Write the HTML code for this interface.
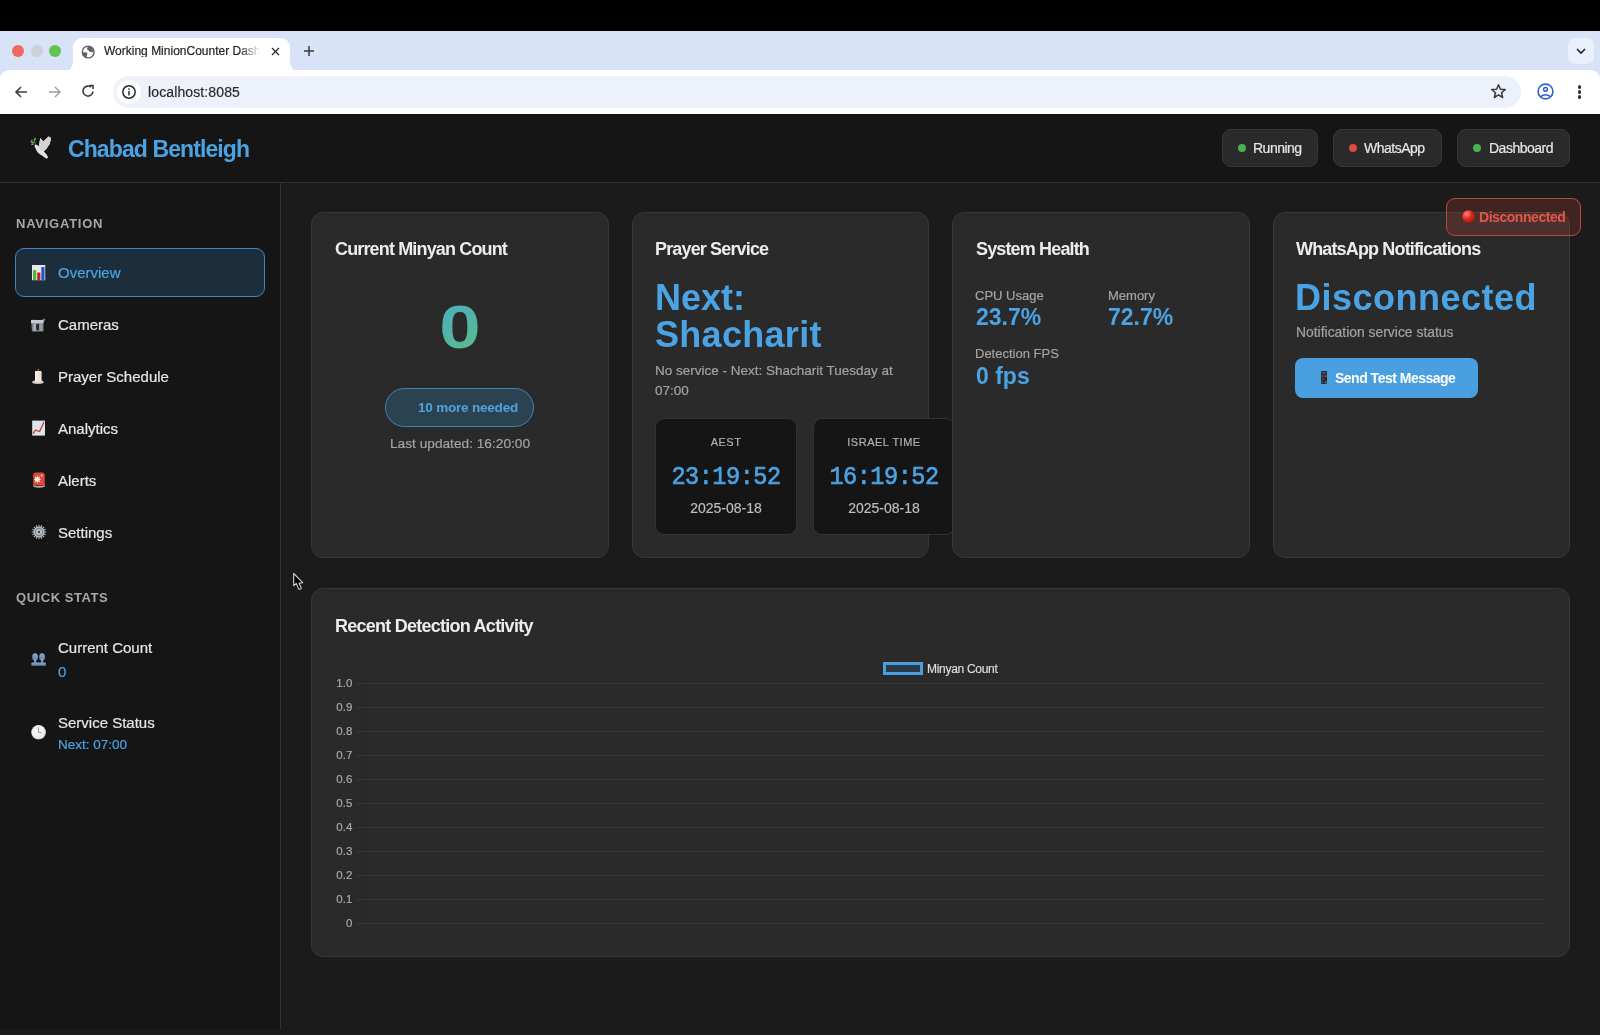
<!DOCTYPE html>
<html><head><meta charset="utf-8">
<style>
*{box-sizing:border-box;margin:0;padding:0}
html,body{width:1600px;height:1035px;overflow:hidden;background:#000;font-family:"Liberation Sans",sans-serif}
.a{position:absolute}
.t{position:absolute;white-space:nowrap;line-height:1;will-change:transform;-webkit-text-stroke:0.2px currentColor}
.t[style*="font-weight:700"],.ctitle,.navlbl{-webkit-text-stroke:0}
/* chrome */
#tabstrip{left:0;top:31px;width:1600px;height:60px;background:#d8e3f8}
#toolbar{left:0;top:70px;width:1600px;height:44px;background:#fff;border-radius:9px 9px 0 0}
#tab{left:73px;top:38px;width:217px;height:33px;background:#fff;border-radius:9px 9px 0 0}
#urlbar{left:113px;top:76px;width:1408px;height:32px;background:#edf2fa;border-radius:16px}
/* page */
#page{left:0;top:114px;width:1600px;height:921px;background:#1b1b1b}
#header{left:0;top:0;width:1600px;height:69px;background:#151515;border-bottom:1px solid #323232}
#sidebar{left:0;top:69px;width:281px;height:846px;background:#151515;border-right:1px solid #343434}
.card{position:absolute;background:#2a2a2a;border:1px solid #383838;border-radius:12px}
.pill{position:absolute;top:15px;height:38px;background:#2a2a2a;border:1px solid #363636;border-radius:9px}
.dot{position:absolute;top:14px;width:8px;height:8px;border-radius:50%}
.navlbl{color:#a8a8a8;font-size:13px;font-weight:700;letter-spacing:0.75px}
.navtxt{color:#e6e6e6;font-size:15px}
.ctitle{color:#ececec;font-size:18px;font-weight:700;letter-spacing:-0.85px}
.blue{color:#4ba3e3}
.muted{color:#a3a3a3}
.tbox{position:absolute;top:204px;width:142px;height:117px;background:#151515;border:1px solid #333;border-radius:9px}
.glab{color:#a8a8a8;font-size:11.5px}
.grid{position:absolute;left:363px;height:1px;width:1181px;background:#363636}
</style></head>
<body>
<!-- browser chrome -->
<div class="a" id="tabstrip"></div>
<div class="a" id="toolbar"></div>
<div class="a" id="tab"></div>
<!-- tab flares -->
<svg class="a" style="left:64px;top:61px" width="10" height="10"><path d="M0 10 Q9 10 9 0 L9 10Z" fill="#fff"/></svg>
<svg class="a" style="left:289px;top:61px" width="10" height="10"><path d="M10 10 Q1 10 1 0 L1 10Z" fill="#fff"/></svg>
<!-- traffic lights -->
<div class="a" style="left:12px;top:45px;width:12px;height:12px;border-radius:50%;background:#ee6a5e"></div>
<div class="a" style="left:31px;top:45px;width:12px;height:12px;border-radius:50%;background:#ccd0d8"></div>
<div class="a" style="left:49px;top:45px;width:12px;height:12px;border-radius:50%;background:#5fc453"></div>
<!-- globe -->
<svg class="a" style="left:81px;top:44.5px" width="14" height="14" viewBox="0 0 14 14"><circle cx="7.2" cy="7" r="5.9" stroke="#5f6368" stroke-width="1.4" fill="#fff"/><path d="M7.3 1.2Q6 2.6 5.8 4.2Q7.5 4.5 8 6.2Q9.8 7.8 12.6 7.2A5.9 5.9 0 0 0 7.3 1.2Z" fill="#5f6368"/><path d="M1.4 7.4Q3.5 7.2 5.8 7.6Q7.2 8.8 6 10Q5.5 11.6 6 12.8A5.9 5.9 0 0 1 1.4 7.4Z" fill="#5f6368"/></svg>
<div class="t" style="left:104px;top:45.3px;font-size:12px;color:#1f1f1f;width:158px;overflow:hidden;-webkit-mask-image:linear-gradient(90deg,#000 86%,transparent 99%)">Working MinionCounter Dashboard</div>
<svg class="a" style="left:271px;top:47px" width="9" height="9" viewBox="0 0 9 9"><path d="M1 1L8 8M8 1L1 8" stroke="#303030" stroke-width="1.3"/></svg>
<svg class="a" style="left:303px;top:45px" width="12" height="12" viewBox="0 0 12 12"><path d="M6 1V11M1 6H11" stroke="#3a3a3a" stroke-width="1.5"/></svg>
<!-- tab dropdown -->
<div class="a" style="left:1568px;top:38px;width:26px;height:26px;border-radius:7px;background:#e9effb"></div>
<svg class="a" style="left:1575px;top:46px" width="12" height="10" viewBox="0 0 12 10"><path d="M2 3L6 7L10 3" stroke="#222" stroke-width="1.6" fill="none"/></svg>
<!-- nav buttons -->
<svg class="a" style="left:13px;top:84px" width="16" height="16" viewBox="0 0 16 16"><path d="M14 8H3M8 3L3 8L8 13" stroke="#3c3c3c" stroke-width="1.6" fill="none"/></svg>
<svg class="a" style="left:47px;top:84px" width="16" height="16" viewBox="0 0 16 16"><path d="M2 8H13M8 3L13 8L8 13" stroke="#9a9a9a" stroke-width="1.4" fill="none"/></svg>
<svg class="a" style="left:80px;top:83px" width="16" height="16" viewBox="0 0 16 16"><path d="M13 8.5A5 5 0 1 1 11.2 4.2" stroke="#3c3c3c" stroke-width="1.6" fill="none"/><path d="M9.5 2.5H13V6" stroke="#3c3c3c" stroke-width="1.6" fill="none"/></svg>
<div class="a" id="urlbar"></div>
<div class="a" style="left:117px;top:80px;width:24px;height:24px;border-radius:50%;background:#fff"></div>
<svg class="a" style="left:121px;top:84px" width="16" height="16" viewBox="0 0 16 16"><circle cx="8" cy="8" r="6.2" stroke="#2a2a2a" stroke-width="1.5" fill="none"/><rect x="7.25" y="7" width="1.5" height="4.5" fill="#2a2a2a"/><rect x="7.25" y="4.3" width="1.5" height="1.5" fill="#2a2a2a"/></svg>
<div class="t" style="left:147.5px;top:84.6px;font-size:14px;color:#2a2a2a;letter-spacing:0.12px">localhost:8085</div>
<svg class="a" style="left:1490px;top:83px" width="17" height="17" viewBox="0 0 17 17"><path d="M8.5 1.8L10.4 6.3L15.2 6.6L11.5 9.7L12.7 14.5L8.5 11.9L4.3 14.5L5.5 9.7L1.8 6.6L6.6 6.3Z" stroke="#3a3a3a" stroke-width="1.5" fill="none" stroke-linejoin="round"/></svg>
<svg class="a" style="left:1536px;top:82px" width="19" height="19" viewBox="0 0 19 19"><circle cx="9.5" cy="9.5" r="7.4" stroke="#2f5fd0" stroke-width="1.6" fill="none"/><circle cx="9.5" cy="7.3" r="1.9" stroke="#2f5fd0" stroke-width="1.5" fill="none"/><path d="M4.6 14.6Q9.5 10.8 14.4 14.6" stroke="#2f5fd0" stroke-width="1.6" fill="none"/></svg>
<div class="a" style="left:1577.5px;top:85px;width:3.5px;height:3.5px;border-radius:50%;background:#333"></div>
<div class="a" style="left:1577.5px;top:90px;width:3.5px;height:3.5px;border-radius:50%;background:#333"></div>
<div class="a" style="left:1577.5px;top:95px;width:3.5px;height:3.5px;border-radius:50%;background:#333"></div>


<!-- page -->
<div class="a" id="page">
  <div class="a" id="header"></div>
  <div class="a" id="sidebar"></div>
</div>
<!-- header content -->
<svg class="a" style="left:26px;top:132px" width="30" height="30" viewBox="0 0 30 30">
 <g fill="#74a85a"><ellipse cx="8.8" cy="7.4" rx="1.7" ry="0.9" transform="rotate(-55 8.8 7.4)"/><ellipse cx="5.6" cy="9.2" rx="1.6" ry="0.9" transform="rotate(-70 5.6 9.2)"/><ellipse cx="7.2" cy="10.6" rx="1.6" ry="0.8" transform="rotate(-20 7.2 10.6)"/><ellipse cx="6.6" cy="12.3" rx="1.5" ry="0.7" transform="rotate(-5 6.6 12.3)"/></g>
 <path d="M8.8 9L9.6 14.5" stroke="#6b9a50" stroke-width="0.7"/>
 <path d="M9.5 12.6Q11 12.4 12.6 14.6L14.2 6.3Q16 7.5 17.2 9.6L22.6 4.6Q24.8 5 25 7.2Q24.5 12 20.5 16.8L17.8 19.4Q20.5 21.5 22 25Q21.8 26.6 20.2 26.5Q17.8 24.5 15.5 23.2Q11.5 21.5 10.2 18Q9.6 16 8.4 14.2Z" fill="#e6e6e6"/>
 <path d="M14.2 6.3Q16 7.5 17.2 9.6L22.6 4.6Q24.8 5 25 7.2Q24.5 12 20.5 16.8L15 19.5Q13.2 17.5 13 15Z" fill="#d2d2d2"/>
</svg>
<div class="t blue" style="left:68px;top:137.8px;font-size:23px;font-weight:700;letter-spacing:-0.9px">Chabad Bentleigh</div>

<div class="pill" style="left:1222px;top:129px;width:96px"></div>
<div class="dot" style="left:1237.5px;top:144px;background:#4caf50"></div>
<div class="t" style="left:1253px;top:141px;font-size:14px;color:#e6e6e6;letter-spacing:-0.5px">Running</div>
<div class="pill" style="left:1333px;top:129px;width:109px"></div>
<div class="dot" style="left:1348.5px;top:144px;background:#e0473f"></div>
<div class="t" style="left:1364px;top:141px;font-size:14px;color:#e6e6e6;letter-spacing:-0.5px">WhatsApp</div>
<div class="pill" style="left:1457px;top:129px;width:113px"></div>
<div class="dot" style="left:1472.5px;top:144px;background:#4caf50"></div>
<div class="t" style="left:1488.5px;top:141px;font-size:14px;color:#e6e6e6;letter-spacing:-0.5px">Dashboard</div>

<!-- sidebar content -->
<div class="t navlbl" style="left:15.6px;top:217px">NAVIGATION</div>
<div class="a" style="left:15px;top:248px;width:250px;height:49px;background:#1c2e3c;border:1.3px solid #4185c0;border-radius:9px"></div>
<div class="t blue" style="left:57.6px;top:265.2px;font-size:15px">Overview</div>
<div class="t navtxt" style="left:57.6px;top:317.2px">Cameras</div>
<div class="t navtxt" style="left:57.6px;top:369.2px">Prayer Schedule</div>
<div class="t navtxt" style="left:57.6px;top:421.2px">Analytics</div>
<div class="t navtxt" style="left:57.6px;top:473.2px">Alerts</div>
<div class="t navtxt" style="left:57.6px;top:525.2px">Settings</div>
<!-- nav icons -->
<svg class="a" style="left:31px;top:264px" width="15" height="17" viewBox="0 0 15 17"><rect x="1" y="1" width="13.2" height="15.2" fill="#e6e9ee"/><rect x="2" y="6" width="3.2" height="10" rx="0.6" fill="#4fb43a"/><rect x="6.2" y="8.4" width="3.2" height="7.6" rx="0.6" fill="#c4251a"/><rect x="10.3" y="3" width="3.2" height="13" rx="0.6" fill="#2456c8"/></svg>
<svg class="a" style="left:30px;top:317px" width="17" height="16" viewBox="0 0 17 16"><path d="M1 3Q7 2.5 10.5 3.5L14.5 1.5L15.2 2.5L13.5 5.5V14.5H2Z" fill="#7b7e84"/><rect x="1" y="3" width="12.5" height="3.2" fill="#c3cad5"/><rect x="3.5" y="6.5" width="2.2" height="7.5" fill="#b5b8bd"/><path d="M6 8Q6.5 6.5 9 7V13H6.5Z" fill="#2a2b2e"/><rect x="9.5" y="6.5" width="3" height="7.5" fill="#9a9ca1"/></svg>
<svg class="a" style="left:30px;top:367px" width="16" height="18" viewBox="0 0 16 18"><path d="M2 15.8Q2.5 13 5 13.5H11Q13.6 13 13.8 15.8Q12 17 8 17Q4 17 2 15.8Z" fill="#c8c8cc"/><rect x="5" y="4" width="6.6" height="11.2" rx="0.8" fill="#efe2dc"/><rect x="5" y="4" width="3" height="11" fill="#f6ecd9"/><path d="M8 1.3Q9.3 3.3 8.3 5Q7.2 3.5 8 1.3Z" fill="#e8c640"/></svg>
<svg class="a" style="left:31px;top:419px" width="15" height="17" viewBox="0 0 15 17"><rect x="1.2" y="1.6" width="12.8" height="15" fill="#dfe4ec"/><path d="M2.2 14.6L4.5 11.2L8.6 12.5L13 3" stroke="#c93a35" stroke-width="1.3" fill="none" stroke-linejoin="round"/></svg>
<svg class="a" style="left:32px;top:471px" width="14" height="18" viewBox="0 0 14 18"><path d="M1.2 14.5V4.5Q1.2 1.5 4 1.5H9.8Q12.8 1.5 12.8 4.5V14.5Z" fill="#df4a35"/><path d="M1.2 14.2Q7 16 12.8 14.2V15.8Q7 17.6 1.2 15.8Z" fill="#a9abaf"/><path d="M5.4 4.6L6.2 6.6L8.3 5.6L7.3 7.7L9.4 8.4L7.3 9.1L8.3 11.2L6.2 10.2L5.4 12.2L4.6 10.2L2.5 11.2L3.5 9.1L1.6 8.4L3.5 7.7L2.5 5.6L4.6 6.6Z" fill="#fff3f0"/><circle cx="9.8" cy="4.5" r="1" fill="#f0c8c4"/></svg>
<svg class="a" style="left:31px;top:524.3px" width="16" height="16" viewBox="0 0 16 16"><path d="M13.37 7.44 L15.29 7.56 L15.29 8.44 L13.37 8.56 L13.18 9.54 L14.90 10.38 L14.56 11.20 L12.75 10.57 L12.19 11.40 L13.46 12.84 L12.84 13.46 L11.40 12.19 L10.57 12.75 L11.20 14.56 L10.38 14.90 L9.54 13.18 L8.56 13.37 L8.44 15.29 L7.56 15.29 L7.44 13.37 L6.46 13.18 L5.62 14.90 L4.80 14.56 L5.43 12.75 L4.60 12.19 L3.16 13.46 L2.54 12.84 L3.81 11.40 L3.25 10.57 L1.44 11.20 L1.10 10.38 L2.82 9.54 L2.63 8.56 L0.71 8.44 L0.71 7.56 L2.63 7.44 L2.82 6.46 L1.10 5.62 L1.44 4.80 L3.25 5.43 L3.81 4.60 L2.54 3.16 L3.16 2.54 L4.60 3.81 L5.43 3.25 L4.80 1.44 L5.62 1.10 L6.46 2.82 L7.44 2.63 L7.56 0.71 L8.44 0.71 L8.56 2.63 L9.54 2.82 L10.38 1.10 L11.20 1.44 L10.57 3.25 L11.40 3.81 L12.84 2.54 L13.46 3.16 L12.19 4.60 L12.75 5.43 L14.56 4.80 L14.90 5.62 L13.18 6.46Z" fill="#b9bfc9"/><circle cx="8" cy="8" r="3.6" fill="none" stroke="#7e838b" stroke-width="1.1"/><circle cx="8" cy="8" r="1.1" fill="#2a2a2a"/></svg>

<div class="t navlbl" style="left:15.6px;top:591px;letter-spacing:0.55px">QUICK STATS</div>
<svg class="a" style="left:30px;top:651px" width="17" height="16" viewBox="0 0 17 16"><defs><linearGradient id="pg" x1="0" y1="0" x2="0" y2="1"><stop offset="0" stop-color="#8eacd0"/><stop offset="1" stop-color="#5f7fa8"/></linearGradient></defs><g fill="url(#pg)"><ellipse cx="5.1" cy="5.9" rx="2.9" ry="3.7"/><ellipse cx="12.1" cy="5.9" rx="2.9" ry="3.7"/><rect x="4" y="8" width="2.2" height="4"/><rect x="11" y="8" width="2.2" height="4"/><rect x="1.4" y="11.5" width="14.5" height="3.2" rx="0.8"/></g></svg>
<div class="t" style="left:57.8px;top:639.5px;font-size:15px;color:#e6e6e6">Current Count</div>
<div class="t blue" style="left:57.8px;top:663.8px;font-size:15px">0</div>
<svg class="a" style="left:30px;top:724px" width="17" height="17" viewBox="0 0 17 17"><defs><radialGradient id="cg" cx="0.45" cy="0.4" r="0.65"><stop offset="0" stop-color="#ffffff"/><stop offset="0.7" stop-color="#ececec"/><stop offset="1" stop-color="#bdbdbd"/></radialGradient></defs><circle cx="8.6" cy="8.3" r="7.3" fill="url(#cg)"/><path d="M8.4 3.2V8.5H11.6" stroke="#9a9a9a" stroke-width="1" fill="none"/></svg>
<div class="t" style="left:57.8px;top:715.1px;font-size:15px;color:#e6e6e6">Service Status</div>
<div class="t blue" style="left:57.8px;top:738.2px;font-size:13.5px">Next: 07:00</div>

<!-- cards -->
<div class="card" style="left:311px;top:212px;width:297.5px;height:346px"></div>
<div class="card" style="left:631.5px;top:212px;width:297.5px;height:346px"></div>
<div class="card" style="left:1272.5px;top:212px;width:297.5px;height:346px"></div>

<!-- card1 -->
<div class="t ctitle" style="left:334.8px;top:240.4px">Current Minyan Count</div>
<div class="t" style="left:410px;width:100px;text-align:center;top:297px;font-size:61px;font-weight:700;transform:scaleX(1.22);background:linear-gradient(135deg,#4aafc0 25%,#5dbb88 75%);-webkit-background-clip:text;color:transparent">0</div>
<div class="a" style="left:385.3px;top:388px;width:148.6px;height:38.7px;border-radius:20px;background:#2b4250;border:1.4px solid #4283b8"></div>
<div class="t blue" style="left:417.5px;top:401.1px;font-size:13.5px;font-weight:700;letter-spacing:-0.2px">10 more needed</div>
<div class="t muted" style="left:390.2px;top:437.4px;font-size:13.7px">Last updated: 16:20:00</div>

<!-- card2 -->
<div class="t ctitle" style="left:655px;top:240.4px">Prayer Service</div>
<div class="t blue" style="left:655.4px;top:279.8px;font-size:36px;font-weight:700">Next:</div>
<div class="t blue" style="left:655.4px;top:316.5px;font-size:36px;font-weight:700;letter-spacing:0.3px">Shacharit</div>
<div class="t muted" style="left:655px;top:363.6px;font-size:13.5px">No service - Next: Shacharit Tuesday at</div>
<div class="t muted" style="left:655px;top:384.2px;font-size:13.5px">07:00</div>
<div class="tbox" style="left:655px;top:417.6px"></div>
<div class="t" style="left:655px;width:142px;text-align:center;top:436.7px;font-size:11px;letter-spacing:0.5px;color:#b0b0b0">AEST</div>
<div class="t blue" style="left:655px;width:142px;text-align:center;top:465.2px;font-size:23.5px;letter-spacing:-0.47px;font-weight:400;-webkit-text-stroke:0.6px #4ba3e3;transform:scaleY(1.09);font-family:'Liberation Mono',monospace">23:19:52</div>
<div class="t" style="left:655px;width:142px;text-align:center;top:501.2px;font-size:14px;color:#bdbdbd">2025-08-18</div>
<div class="tbox" style="left:812.6px;top:417.6px"></div>
<div class="t" style="left:812.6px;width:142px;text-align:center;top:436.7px;font-size:11px;letter-spacing:0.5px;color:#b0b0b0">ISRAEL TIME</div>
<div class="t blue" style="left:812.6px;width:142px;text-align:center;top:465.2px;font-size:23.5px;letter-spacing:-0.47px;font-weight:400;-webkit-text-stroke:0.6px #4ba3e3;transform:scaleY(1.09);font-family:'Liberation Mono',monospace">16:19:52</div>
<div class="t" style="left:812.6px;width:142px;text-align:center;top:501.2px;font-size:14px;color:#bdbdbd">2025-08-18</div>
<!-- card3 on top of overflow -->
<div class="card" style="left:952px;top:212px;width:297.5px;height:346px"></div>
<div class="t ctitle" style="left:975.5px;top:240.4px">System Health</div>
<div class="t muted" style="left:975.2px;top:288.8px;font-size:13px">CPU Usage</div>
<div class="t blue" style="left:975.5px;top:306px;font-size:23px;font-weight:700">23.7%</div>
<div class="t muted" style="left:1108.2px;top:288.8px;font-size:13px">Memory</div>
<div class="t blue" style="left:1108.2px;top:306px;font-size:23px;font-weight:700">72.7%</div>
<div class="t muted" style="left:975.2px;top:347.3px;font-size:13px">Detection FPS</div>
<div class="t blue" style="left:975.5px;top:364.9px;font-size:23px;font-weight:700">0 fps</div>

<!-- card4 -->
<div class="t ctitle" style="left:1296px;top:240.4px">WhatsApp Notifications</div>
<div class="t blue" style="left:1295px;top:280.3px;font-size:36px;font-weight:700;letter-spacing:0.5px">Disconnected</div>
<div class="t muted" style="left:1296px;top:325.6px;font-size:13.9px">Notification service status</div>
<div class="a" style="left:1295px;top:358.2px;width:183px;height:39.8px;border-radius:8px;background:#4a9fe0"></div>
<svg class="a" style="left:1321px;top:371px" width="6" height="13" viewBox="0 0 6 13"><rect x="0" y="0" width="6" height="13" rx="0.8" fill="#23303a"/><rect x="0.6" y="1.2" width="1.4" height="1.4" fill="#3f6a2a"/><rect x="2.3" y="1.2" width="1.4" height="1.4" fill="#7a5c60"/><rect x="4" y="1.2" width="1.4" height="1.4" fill="#5a3a30"/><rect x="0.6" y="4.4" width="1.4" height="1.4" fill="#6a6a20"/><rect x="2.3" y="4.4" width="1.4" height="1.4" fill="#9a2a8a"/><rect x="4" y="4.4" width="1.4" height="1.4" fill="#b06a10"/><rect x="0.6" y="7.4" width="1.4" height="1.4" fill="#2a4a6a"/><rect x="2.3" y="7.4" width="1.4" height="1.4" fill="#b03010"/><rect x="4" y="7.4" width="1.4" height="1.4" fill="#111"/><rect x="0.6" y="10.6" width="1.4" height="1.4" fill="#3a7a30"/><rect x="4" y="10.6" width="1.4" height="1.4" fill="#8a8a80"/></svg>
<div class="t" style="left:1334.6px;top:371.1px;font-size:14px;font-weight:700;color:#fff;letter-spacing:-0.5px">Send Test Message</div>

<!-- chart card -->
<div class="card" style="left:311px;top:588px;width:1259px;height:369px"></div>
<div class="t ctitle" style="left:334.7px;top:616.6px;letter-spacing:-0.75px">Recent Detection Activity</div>
<div class="a" style="left:882.5px;top:661.6px;width:40.3px;height:13.6px;border:3px solid #4a9fe0;background:#2b3a47"></div>
<div class="t" style="left:927px;top:662.6px;font-size:12px;color:#dcdcdc;letter-spacing:-0.3px">Minyan Count</div>
<div class="a" style="left:362px;top:683px;width:1px;height:241px;background:#262626"></div>
<div class="grid" style="top:683.0px;left:356px;width:1188px"></div>
<div class="t glab" style="left:300px;width:52.3px;text-align:right;top:677.6px;font-size:11.5px">1.0</div>
<div class="grid" style="top:707.0px;left:356px;width:1188px"></div>
<div class="t glab" style="left:300px;width:52.3px;text-align:right;top:701.6px;font-size:11.5px">0.9</div>
<div class="grid" style="top:731.0px;left:356px;width:1188px"></div>
<div class="t glab" style="left:300px;width:52.3px;text-align:right;top:725.6px;font-size:11.5px">0.8</div>
<div class="grid" style="top:755.0px;left:356px;width:1188px"></div>
<div class="t glab" style="left:300px;width:52.3px;text-align:right;top:749.6px;font-size:11.5px">0.7</div>
<div class="grid" style="top:779.0px;left:356px;width:1188px"></div>
<div class="t glab" style="left:300px;width:52.3px;text-align:right;top:773.6px;font-size:11.5px">0.6</div>
<div class="grid" style="top:803.0px;left:356px;width:1188px"></div>
<div class="t glab" style="left:300px;width:52.3px;text-align:right;top:797.6px;font-size:11.5px">0.5</div>
<div class="grid" style="top:827.0px;left:356px;width:1188px"></div>
<div class="t glab" style="left:300px;width:52.3px;text-align:right;top:821.6px;font-size:11.5px">0.4</div>
<div class="grid" style="top:851.0px;left:356px;width:1188px"></div>
<div class="t glab" style="left:300px;width:52.3px;text-align:right;top:845.6px;font-size:11.5px">0.3</div>
<div class="grid" style="top:875.0px;left:356px;width:1188px"></div>
<div class="t glab" style="left:300px;width:52.3px;text-align:right;top:869.6px;font-size:11.5px">0.2</div>
<div class="grid" style="top:899.0px;left:356px;width:1188px"></div>
<div class="t glab" style="left:300px;width:52.3px;text-align:right;top:893.6px;font-size:11.5px">0.1</div>
<div class="grid" style="top:923.0px;left:356px;width:1188px"></div>
<div class="t glab" style="left:300px;width:52.3px;text-align:right;top:917.6px;font-size:11.5px">0</div>

<!-- toast -->
<div class="a" style="left:1446px;top:198px;width:135px;height:38px;border-radius:9px;background:rgba(231,76,60,0.18);border:1px solid #c2453d"></div>
<svg class="a" style="left:1461.5px;top:209.5px" width="13" height="13" viewBox="0 0 13 13"><defs><radialGradient id="rg" cx="0.35" cy="0.3" r="0.8"><stop offset="0" stop-color="#ff8a7a"/><stop offset="0.5" stop-color="#e0281e"/><stop offset="1" stop-color="#a51510"/></radialGradient></defs><circle cx="6.5" cy="6.5" r="6.3" fill="url(#rg)"/></svg>
<div class="t" style="left:1478.7px;top:210px;font-size:14px;font-weight:700;color:#e5554a;letter-spacing:-0.45px">Disconnected</div>
<!-- cursor -->
<svg class="a" style="left:291px;top:571px" width="14" height="20" viewBox="0 0 14 20"><path d="M2.7 2.5L2.7 14.6L5.3 12.4L7.5 17.6Q8.4 18.8 9.6 17.9L10.3 17.2L8.1 12.1L11.7 11.7Z" fill="#000" stroke="#d2d2d2" stroke-width="1.1" stroke-linejoin="round"/></svg>
</body></html>
